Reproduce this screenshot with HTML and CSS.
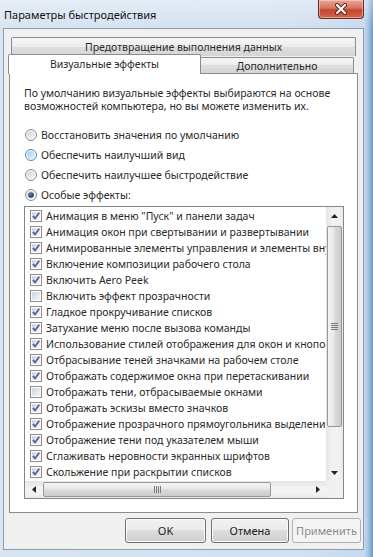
FILE: index.html
```html
<!DOCTYPE html>
<html lang="ru">
  <head>
    <meta charset="UTF-8" />
    <title>Параметры быстродействия</title>
    <link rel="stylesheet" href="styles.css">
  </head>
  <body>
    <svg class="defs" width="0" height="0" aria-hidden="true">
      <defs>
        <linearGradient id="cbfill" x1="0" y1="0" x2="1" y2="1">
          <stop offset="0" stop-color="#cfd3d9" />
          <stop offset="1" stop-color="#f7f7f7" />
        </linearGradient>
        <linearGradient id="rfill" x1="0" y1="0" x2="1" y2="1">
          <stop offset="0" stop-color="#d0d0d0" />
          <stop offset="1" stop-color="#fafafa" />
        </linearGradient>
        <linearGradient id="rhover" x1="0" y1="0" x2="1" y2="1">
          <stop offset="0" stop-color="#9ccbea" />
          <stop offset="1" stop-color="#e6f4fc" />
        </linearGradient>
        <radialGradient id="rdot" cx="0.4" cy="0.35" r="0.7">
          <stop offset="0" stop-color="#6f86b8" />
          <stop offset="1" stop-color="#14244e" />
        </radialGradient>
        <symbol id="cb" viewBox="0 0 12 12">
          <rect x="0.5" y="0.5" width="11" height="11" fill="#fff" stroke="#8f8f8f" />
          <rect x="2" y="2" width="8" height="8" fill="url(#cbfill)" />
        </symbol>
        <symbol id="cb-on" viewBox="0 0 12 12">
          <rect x="0.5" y="0.5" width="11" height="11" fill="#fff" stroke="#8f8f8f" />
          <rect x="2" y="2" width="8" height="8" fill="url(#cbfill)" />
          <path d="M2.9 6 L5 8.4 L9.3 2.8" fill="none" stroke="#45599a" stroke-width="1.6" />
        </symbol>
        <symbol id="radio" viewBox="0 0 12 12">
          <circle cx="6" cy="6" r="5.5" fill="#f4f4f4" stroke="#8f8f8f" />
          <circle cx="6" cy="6" r="3.8" fill="url(#rfill)" />
        </symbol>
        <symbol id="radio-hover" viewBox="0 0 12 12">
          <circle cx="6" cy="6" r="5.5" fill="#eef7fd" stroke="#4d8fc2" />
          <circle cx="6" cy="6" r="3.8" fill="url(#rhover)" />
        </symbol>
        <symbol id="radio-on" viewBox="0 0 12 12">
          <circle cx="6" cy="6" r="5.5" fill="#f4f4f4" stroke="#8f8f8f" />
          <circle cx="6" cy="6" r="3.8" fill="url(#rfill)" />
          <circle cx="6" cy="6" r="2.8" fill="url(#rdot)" />
        </symbol>
      </defs>
    </svg>

    <div class="window">
      <div class="titlebar">
        <span class="title">Параметры быстродействия</span>
        <div class="close-btn">
          <svg width="14" height="12" viewBox="0 0 14 12">
            <path d="M3 2 L11 10 M11 2 L3 10" stroke="#5a2020" stroke-width="4" stroke-linecap="round" />
            <path d="M3 2 L11 10 M11 2 L3 10" stroke="#ffffff" stroke-width="2.2" stroke-linecap="round" />
          </svg>
        </div>
      </div>

      <div class="frame">
        <div class="client">
          <div class="tabs">
            <div class="tab-row tab-row-back">
              <div class="tab tab-wide">Предотвращение выполнения данных</div>
            </div>
            <div class="tab-row tab-row-front">
              <div class="tab tab-active">Визуальные эффекты</div>
              <div class="tab tab-more">Дополнительно</div>
            </div>
          </div>

          <div class="panel">
            <p class="intro">
              По умолчанию визуальные эффекты выбираются на основе<br />
              возможностей компьютера, но вы можете изменить их.
            </p>

            <div class="radios">
              <div class="radio-row"><svg class="radio"><use href="#radio" /></svg>Восстановить значения по умолчанию</div>
              <div class="radio-row"><svg class="radio"><use href="#radio-hover" /></svg>Обеспечить наилучший вид</div>
              <div class="radio-row"><svg class="radio"><use href="#radio" /></svg>Обеспечить наилучшее быстродействие</div>
              <div class="radio-row"><svg class="radio"><use href="#radio-on" /></svg>Особые эффекты:</div>
            </div>

            <div class="listbox">
              <div class="list-main">
                <div class="items">
                  <div class="item"><svg class="check"><use href="#cb-on" /></svg>Анимация в меню "Пуск" и панели задач</div>
                  <div class="item"><svg class="check"><use href="#cb-on" /></svg>Анимация окон при свертывании и развертывании</div>
                  <div class="item"><svg class="check"><use href="#cb-on" /></svg>Анимированные элементы управления и элементы внутри окна</div>
                  <div class="item"><svg class="check"><use href="#cb-on" /></svg>Включение композиции рабочего стола</div>
                  <div class="item"><svg class="check"><use href="#cb-on" /></svg>Включить Aero Peek</div>
                  <div class="item"><svg class="check"><use href="#cb" /></svg>Включить эффект прозрачности</div>
                  <div class="item"><svg class="check"><use href="#cb-on" /></svg>Гладкое прокручивание списков</div>
                  <div class="item"><svg class="check"><use href="#cb-on" /></svg>Затухание меню после вызова команды</div>
                  <div class="item"><svg class="check"><use href="#cb-on" /></svg>Использование стилей отображения для окон и кнопок</div>
                  <div class="item"><svg class="check"><use href="#cb-on" /></svg>Отбрасывание теней значками на рабочем столе</div>
                  <div class="item"><svg class="check"><use href="#cb-on" /></svg>Отображать содержимое окна при перетаскивании</div>
                  <div class="item"><svg class="check"><use href="#cb" /></svg>Отображать тени, отбрасываемые окнами</div>
                  <div class="item"><svg class="check"><use href="#cb-on" /></svg>Отображать эскизы вместо значков</div>
                  <div class="item"><svg class="check"><use href="#cb-on" /></svg>Отображение прозрачного прямоугольника выделения</div>
                  <div class="item"><svg class="check"><use href="#cb-on" /></svg>Отображение тени под указателем мыши</div>
                  <div class="item"><svg class="check"><use href="#cb-on" /></svg>Сглаживать неровности экранных шрифтов</div>
                  <div class="item"><svg class="check"><use href="#cb-on" /></svg>Скольжение при раскрытии списков</div>
                </div>

                <div class="vscroll">
                  <div class="sb-btn">
                    <svg width="7" height="4" viewBox="0 0 7 4"><path d="M0 4 L3.5 0 L7 4 Z" fill="#222" /></svg>
                  </div>
                  <div class="vthumb">
                    <svg width="7" height="7" viewBox="0 0 7 7"><path d="M0 0.5 H7 M0 2.5 H7 M0 4.5 H7 M0 6.5 H7" stroke="#7a7a7a" stroke-width="1" /></svg>
                  </div>
                  <div class="sb-track"></div>
                  <div class="sb-btn">
                    <svg width="7" height="4" viewBox="0 0 7 4"><path d="M0 0 L3.5 4 L7 0 Z" fill="#222" /></svg>
                  </div>
                </div>
              </div>

              <div class="h-row">
                <div class="hscroll">
                  <div class="sb-btn">
                    <svg width="4" height="7" viewBox="0 0 4 7"><path d="M4 0 L0 3.5 L4 7 Z" fill="#222" /></svg>
                  </div>
                  <div class="hthumb">
                    <svg width="7" height="7" viewBox="0 0 7 7"><path d="M0.5 0 V7 M2.5 0 V7 M4.5 0 V7 M6.5 0 V7" stroke="#7a7a7a" stroke-width="1" /></svg>
                  </div>
                  <div class="sb-track"></div>
                  <div class="sb-btn">
                    <svg width="4" height="7" viewBox="0 0 4 7"><path d="M0 0 L4 3.5 L0 7 Z" fill="#222" /></svg>
                  </div>
                </div>
                <div class="corner"></div>
              </div>
            </div>
          </div>

          <div class="buttons">
            <button class="btn btn-ok">OK</button>
            <button class="btn btn-cancel">Отмена</button>
            <button class="btn btn-apply" disabled>Применить</button>
          </div>
        </div>
      </div>
    </div>
  </body>
</html>
```

FILE: styles.css
```css
* {
  box-sizing: border-box;
}

body {
  margin: 0;
  font-family: "Noto Sans", sans-serif;
  font-size: 10.5px;
  color: #2a2a2a;
  overflow: hidden;
  background: #cddcee;
}

.defs {
  display: block;
  width: 0;
  height: 0;
}

.window {
  width: 373px;
  height: 557px;
  display: flex;
  flex-direction: column;
  background: linear-gradient(
    to right,
    #d8e4f1 0,
    #d3e0f0 300px,
    #c7d9ee 364px,
    #a9c5e4 368px,
    #6d98c7 373px
  );
}

/* title bar */

.titlebar {
  height: 28px;
  display: flex;
  justify-content: space-between;
  align-items: flex-start;
  padding: 0 9px 0 4px;
  background: linear-gradient(rgba(255, 255, 255, 0.35), rgba(255, 255, 255, 0));
}

.title {
  margin-top: 7px;
  font-size: 11px;
  color: #111;
}

.close-btn {
  width: 46px;
  height: 19px;
  display: flex;
  align-items: center;
  justify-content: center;
  border: 1px solid #6b2a24;
  border-top: none;
  border-radius: 0 0 4px 4px;
  background: linear-gradient(#e8a899 0%, #d6735d 45%, #c4452f 55%, #d4664a 100%);
  box-shadow: inset 0 0 0 1px rgba(255, 220, 210, 0.5);
}

/* client area */

.frame {
  flex: 1;
  display: flex;
  padding: 0 9px 7px 3px;
}

.client {
  flex: 1;
  display: flex;
  flex-direction: column;
  padding: 8px 5px 6px 5px;
  border: 1px solid #8c9bae;
  background: #f0f0f0;
}

/* tabs */

.tabs {
  height: 36px;
  display: flex;
  flex-direction: column;
}

.tab-row {
  height: 18px;
  display: flex;
  align-items: flex-start;
}

.tab-row-back {
  padding: 0 2px;
}

.tab {
  display: flex;
  align-items: center;
  justify-content: center;
  border: 1px solid #898c95;
  border-bottom: none;
  border-radius: 2px 2px 0 0;
  background: linear-gradient(#f6f6f6, #ececec 50%, #dedede 50%, #d5d5d5);
  white-space: nowrap;
}

.tab-wide {
  flex: 1;
  height: 19px;
}

.tab-active {
  position: relative;
  z-index: 1;
  width: 193px;
  height: 20px;
  margin: -1px 0 0 -1px;
  padding-bottom: 2px;
  background: #fff;
}

.tab-more {
  width: 154px;
  height: 16px;
  margin: 2px 0 0 -1px;
}

/* tab page */

.panel {
  height: 440px;
  display: flex;
  flex-direction: column;
  padding: 13px 13px 13px 14px;
  border: 1px solid #898c95;
  background: #fff;
}

.intro {
  margin: 0;
  line-height: 13px;
}

.radios {
  margin-top: 12px;
  display: flex;
  flex-direction: column;
}

.radio-row {
  height: 20px;
  display: flex;
  align-items: center;
  gap: 4px;
  padding-left: 1px;
}

.radio {
  width: 12px;
  height: 12px;
}

/* list */

.listbox {
  margin-top: 1px;
  width: 320px;
  height: 293px;
  display: flex;
  flex-direction: column;
  border: 1px solid #828790;
}

.list-main {
  height: 274px;
  display: flex;
}

.items {
  width: 301px;
  padding-top: 1px;
  overflow: hidden;
}

.item {
  height: 16px;
  display: flex;
  align-items: center;
  gap: 4px;
  padding-left: 5px;
  white-space: nowrap;
}

.check {
  flex: none;
  width: 12px;
  height: 12px;
}

/* scroll bars */

.vscroll {
  width: 17px;
  display: flex;
  flex-direction: column;
  background: linear-gradient(to right, #e4e4e4, #f2f2f2 40%, #f2f2f2 70%, #e9e9e9);
}

.sb-btn {
  flex: none;
  width: 17px;
  height: 17px;
  display: flex;
  align-items: center;
  justify-content: center;
}

.sb-track {
  flex: 1;
}

.vthumb {
  height: 201px;
  margin: 2px 1px 0 1px;
  display: flex;
  align-items: center;
  justify-content: center;
  border: 1px solid #989898;
  border-radius: 2px;
  background: linear-gradient(to right, #f4f4f4, #e8e8e8 45%, #d9d9d9 55%, #cbcbcb);
}

.h-row {
  height: 17px;
  display: flex;
}

.hscroll {
  width: 301px;
  display: flex;
  background: linear-gradient(#e4e4e4, #f2f2f2 40%, #f2f2f2 70%, #e9e9e9);
}

.hthumb {
  width: 228px;
  margin: 1px 0 1px 1px;
  display: flex;
  align-items: center;
  justify-content: center;
  border: 1px solid #989898;
  border-radius: 2px;
  background: linear-gradient(#f4f4f4, #e8e8e8 45%, #d9d9d9 55%, #cbcbcb);
}

.corner {
  width: 17px;
  background: #f0f0f0;
}

/* dialog buttons */

.buttons {
  height: 25px;
  margin: 5px -3px 0 0;
  display: flex;
  justify-content: flex-end;
}

.btn {
  height: 25px;
  padding: 0;
  font-family: "Noto Sans", sans-serif;
  font-size: 11px;
  font-weight: 400;
  color: #222;
  border: 1px solid #707070;
  border-radius: 3px;
  background: linear-gradient(#f2f2f2, #ebebeb 50%, #dddddd 50%, #cfcfcf);
  box-shadow: inset 0 0 0 1px #fbfbfb;
}

.btn-ok {
  width: 81px;
}

.btn-cancel {
  width: 78px;
  margin-left: 5px;
}

.btn-apply {
  width: 69px;
  margin-left: 3px;
  color: #8c8c8c;
  border-color: #adb2b5;
  background: #f4f4f4;
  box-shadow: none;
}
```
